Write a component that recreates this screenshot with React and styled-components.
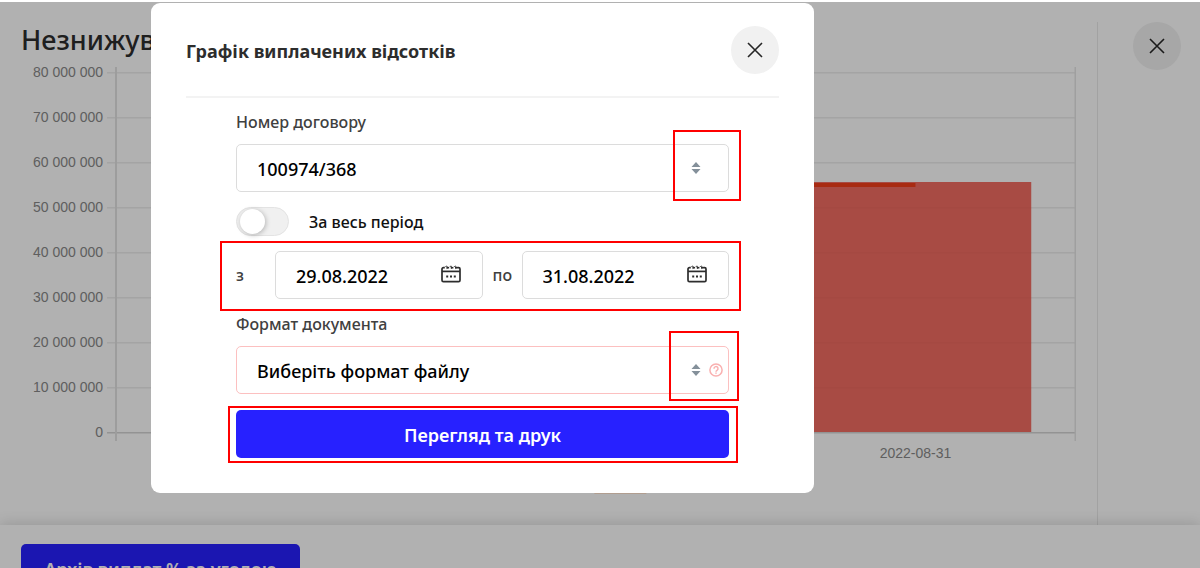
import React, { useState } from "react"
import styled, { createGlobalStyle, css } from "styled-components"

const theme = {
  fonts: {
    ui: `"Noto Sans", "Open Sans", sans-serif`,
    chart: `"Liberation Sans", Arial, sans-serif`,
  },
  colors: {
    blue: "#2721ff",
    text: "#2d2d2d",
    label: "#404040",
    border: "#dcdcdc",
    error: "#fcc0c0",
    highlight: "#ff0000",
  },
}

const GlobalStyle = createGlobalStyle`
  * {
    box-sizing: border-box;
  }
  body {
    margin: 0;
    background: #fff;
    font-family: ${theme.fonts.ui};
    color: ${theme.colors.text};
  }
  button, input, select {
    font-family: inherit;
    margin: 0;
  }
`

const Page = styled.div`
  height: 100vh;
  padding-top: 2px;
  overflow: hidden;
`

const Screen = styled.div`
  position: relative;
  display: flex;
  flex-direction: column;
  height: 100%;
  overflow: hidden;
`

const Body = styled.div`
  display: flex;
  flex: 1;
  padding-top: 20px;
`

const ChartPanel = styled.section`
  flex: 1;
  border-right: 1px solid #eaeaea;
  padding-right: 21px;
`

const PageTitle = styled.h1`
  margin: 0 0 9px 21px;
  font-size: 27px;
  line-height: 36px;
  font-weight: 500;
`

const Chart = styled.div`
  display: flex;
  font-family: ${theme.fonts.chart};
  font-size: 14px;
  color: #898989;
`

const YAxis = styled.div`
  display: flex;
  flex-direction: column;
  width: 103px;
  height: 400px;
  text-align: right;
  span {
    flex: none;
    height: 45px;
    line-height: 10px;
  }
`

const Plot = styled.svg`
  flex: 1;
  min-width: 0;
  height: 430px;
  text {
    font-size: 14px;
    fill: #898989;
  }
`

const Side = styled.aside`
  width: 102px;
  padding-left: 35px;
`

const RoundButton = styled.button`
  display: flex;
  align-items: center;
  justify-content: center;
  flex: none;
  width: 48px;
  height: 48px;
  border: 0;
  border-radius: 50%;
  padding: 0;
  background: #f1f1f1;
`

const Footer = styled.footer`
  flex: none;
  height: 43px;
  padding: 19px 21px 0;
  background: #fff;
  box-shadow: 0 -2px 14px rgba(0, 0, 0, 0.14);
`

const PrimaryButton = styled.button`
  display: block;
  width: ${({ $wide }) => ($wide ? "100%" : "279px")};
  height: 48px;
  border: 0;
  border-radius: 5px;
  padding: 2px 0 0;
  background: ${theme.colors.blue};
  color: #fff;
  font-size: 18px;
  line-height: 24px;
  font-weight: 600;
`

const Overlay = styled.div`
  position: absolute;
  inset: 0;
  display: flex;
  align-items: flex-start;
  padding: 1px 24px 0 151px;
  background: rgba(0, 0, 0, 0.305);
`

const Modal = styled.div`
  width: 100%;
  max-width: 663px;
  padding: 23px 35px 35px;
  border-radius: 9px;
  background: #fff;
`

const ModalHeader = styled.header`
  display: flex;
  align-items: center;
  justify-content: space-between;
  padding-bottom: 22px;
  border-bottom: 2px solid #f3f3f3;
`

const ModalTitle = styled.h2`
  margin: 0;
  padding-top: 2px;
  font-size: 18px;
  line-height: 24px;
  font-weight: 700;
`

const Form = styled.form`
  padding: 12px 50px 0;
`

const Label = styled.label`
  display: block;
  font-size: 16px;
  line-height: 24px;
  font-weight: 500;
  color: ${theme.colors.label};
`

const Highlight = styled.span`
  position: absolute;
  border: 2px solid ${theme.colors.highlight};
  pointer-events: none;
`

const ContractMark = styled(Highlight)`
  inset: -14px -12px -9px auto;
  width: 68px;
`

const DatesMark = styled(Highlight)`
  inset: -10px -12px -12px -16px;
`

const FormatMark = styled(Highlight)`
  inset: -15px -10px -7px auto;
  width: 70px;
`

const SubmitMark = styled(Highlight)`
  inset: -3px -9px -5px -8px;
`

const Field = styled.div`
  position: relative;
  display: flex;
  align-items: center;
  flex: 1;
  min-width: 0;
  height: 48px;
  ${({ $spaced }) => $spaced && css`margin: 10px 0 15px;`};
`

const controlStyles = css`
  width: 100%;
  height: 100%;
  border: 1px solid ${({ $error }) => ($error ? theme.colors.error : theme.colors.border)};
  border-radius: 5px;
  padding: 2px 20px 0;
  outline: 0;
  background: transparent;
  color: #000;
  font-size: 18px;
  font-weight: 500;
`

const Select = styled.select`
  ${controlStyles};
  appearance: none;
`

const Input = styled.input`
  ${controlStyles};
`

const FieldIcons = styled.span`
  position: absolute;
  right: ${({ $inset }) => $inset}px;
  display: flex;
  align-items: center;
  gap: 8px;
  pointer-events: none;
`

const CalendarButton = styled.button`
  position: absolute;
  right: 22px;
  display: flex;
  border: 0;
  padding: 0;
  background: none;
`

const SwitchRow = styled.label`
  display: flex;
  align-items: center;
  gap: 20px;
  height: 29px;
  margin-bottom: 15px;
  font-size: 16px;
  font-weight: 500;
  color: #111;
`

const Switch = styled.input`
  appearance: none;
  display: flex;
  align-items: center;
  width: 53px;
  height: 29px;
  margin: 0;
  border: 1px solid #e3e3e3;
  border-radius: 15px;
  padding: 0 3px;
  background: #f0f0f0;
  &::before {
    content: "";
    width: 25px;
    height: 25px;
    border-radius: 50%;
    background: #fff;
    box-shadow: 1px 1px 5px rgba(0, 0, 0, 0.25);
  }
  &:checked {
    justify-content: flex-end;
    background: ${theme.colors.blue};
  }
`

const DateRow = styled.div`
  position: relative;
  display: flex;
  align-items: center;
  margin-bottom: 13px;
`

const DateLabel = styled(Label)`
  flex: none;
  width: 39px;
  padding-left: ${({ $pad = 0 }) => $pad}px;
`

const SubmitRow = styled.div`
  position: relative;
  padding-top: 1px;
`

const CloseIcon = () => (
  <svg width="16" height="16" viewBox="0 0 16 16" fill="none" stroke="#262626" strokeWidth="1.6">
    <path d="M1 1L15 15M15 1L1 15" />
  </svg>
)

const SortIcon = () => (
  <svg width="10" height="12" viewBox="0 0 10 12" fill="#84909a">
    <path d="M5 0L9.5 5H.5ZM5 12L.5 7H9.5Z" />
  </svg>
)

const HelpIcon = () => (
  <svg width="14" height="14" viewBox="0 0 14 14" fill="none" stroke="#f9b0b0" strokeWidth="1.5">
    <circle cx="7" cy="7" r="6.1" />
    <path d="M5 5.7a2 2 0 1 1 3 1.6c-.7.4-1 .7-1 1.5M7 9.6v1.2" />
  </svg>
)

const CalendarIcon = () => (
  <svg width="20" height="20" viewBox="0 0 20 20" fill="none" stroke="#2d2d2d" strokeWidth="1.7">
    <rect x="1" y="2.6" width="18" height="14" rx="1.4" />
    <path d="M1 6.4H19" />
    <path d="M4.6 4.2V2a1.2 1.2 0 0 1 2.4 0M8.9 4.2V2a1.2 1.2 0 0 1 2.4 0M13.2 4.2V2a1.2 1.2 0 0 1 2.4 0" stroke="#fff" strokeWidth="1.6" />
    <path d="M4.4 2a1.2 1.2 0 1 1 1.4 1.6M8.8 2a1.2 1.2 0 1 1 1.4 1.6M13.2 2a1.2 1.2 0 1 1 1.4 1.6" strokeWidth="1" />
    <path d="M5.2 11.4h2M9 11.4h2M12.8 11.4h2" strokeWidth="2" />
  </svg>
)

const ticks = ["80 000 000", "70 000 000", "60 000 000", "50 000 000", "40 000 000", "30 000 000", "20 000 000", "10 000 000", "0"]

const BalanceChart = () => (
  <Chart>
    <YAxis>
      {ticks.map(tick => (
        <span key={tick}>{tick}</span>
      ))}
    </YAxis>
    <Plot>
      {ticks.map((tick, i) => (
        <rect key={tick} x="4" y={5 + i * 45} width="100%" height="1.5" fill={i === 8 ? "#d4d4d4" : "#ececec"} />
      ))}
      <rect x="12" y="0" width="2" height="374" fill="#e2e2e2" />
      <svg x="100%" overflow="visible">
        <rect x="-1.5" y="0" width="1.5" height="374" fill="#e6e6e6" />
      </svg>
      <rect x="70.5%" y="115" width="24.9%" height="250" fill="rgba(239, 73, 60, 0.8)" />
      <rect x="25%" y="116" width="58.5%" height="4" fill="#f23f1a" />
      <text x="83.5%" y="391" textAnchor="middle">2022-08-31</text>
      <rect x="50.5%" y="414" width="52" height="13" fill="#ffe4d0" />
    </Plot>
  </Chart>
)

const DateField = ({ id, value }) => {
  const [date, setDate] = useState(value)
  return (
    <Field>
      <Input id={id} value={date} onChange={e => setDate(e.target.value)} />
      <CalendarButton type="button" aria-label="Календар">
        <CalendarIcon />
      </CalendarButton>
    </Field>
  )
}

const InterestModal = () => (
  <Modal role="dialog" aria-labelledby="modal-title">
    <ModalHeader>
      <ModalTitle id="modal-title">Графік виплачених відсотків</ModalTitle>
      <RoundButton type="button" aria-label="Закрити">
        <CloseIcon />
      </RoundButton>
    </ModalHeader>
    <Form onSubmit={e => e.preventDefault()}>
      <Label htmlFor="contract">Номер договору</Label>
      <Field $spaced>
        <Select id="contract">
          <option>100974/368</option>
        </Select>
        <FieldIcons $inset={28}>
          <SortIcon />
        </FieldIcons>
        <ContractMark />
      </Field>
      <SwitchRow>
        <Switch type="checkbox" />
        За весь період
      </SwitchRow>
      <DateRow>
        <DateLabel htmlFor="from">з</DateLabel>
        <DateField id="from" value="29.08.2022" />
        <DateLabel htmlFor="to" $pad={10}>по</DateLabel>
        <DateField id="to" value="31.08.2022" />
        <DatesMark />
      </DateRow>
      <Label htmlFor="format">Формат документа</Label>
      <Field $spaced>
        <Select id="format" $error>
          <option>Виберіть формат файлу</option>
        </Select>
        <FieldIcons $inset={6}>
          <SortIcon />
          <HelpIcon />
        </FieldIcons>
        <FormatMark />
      </Field>
      <SubmitRow>
        <PrimaryButton type="submit" $wide>Перегляд та друк</PrimaryButton>
        <SubmitMark />
      </SubmitRow>
    </Form>
  </Modal>
)

const App = () => (
  <Page>
    <GlobalStyle />
    <Screen>
      <Body>
        <ChartPanel>
          <PageTitle>Незнижув</PageTitle>
          <BalanceChart />
        </ChartPanel>
        <Side>
          <RoundButton type="button" aria-label="Закрити">
            <CloseIcon />
          </RoundButton>
        </Side>
      </Body>
      <Footer>
        <PrimaryButton type="button">Архів виплат % за угодою</PrimaryButton>
      </Footer>
      <Overlay>
        <InterestModal />
      </Overlay>
    </Screen>
  </Page>
)

export default App
